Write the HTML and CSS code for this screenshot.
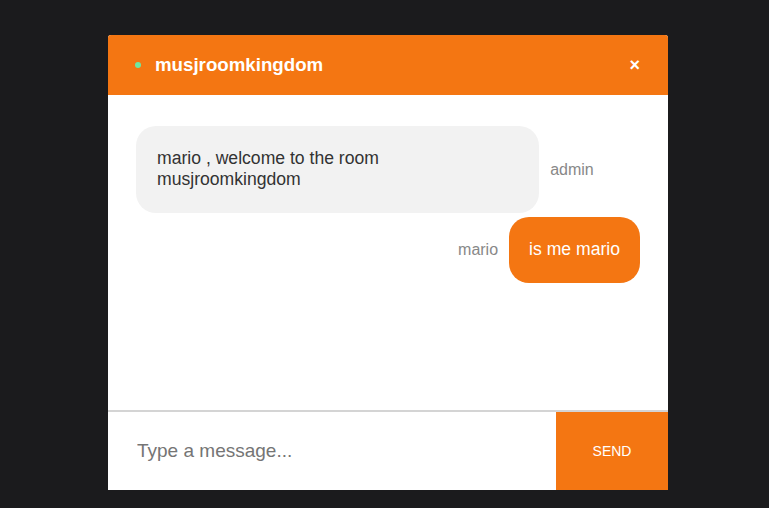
FILE: index.html
```html
<!DOCTYPE html>
<html>
<head>
<meta charset="utf-8">
<link rel="stylesheet" href="styles.css">
</head>
<body>
<div class="chat">
  <div class="chat-header">
    <span class="status-dot"></span>
    <span class="room-name">musjroomkingdom</span>
    <span class="close">×</span>
  </div>
  <div class="chat-body">
    <div class="msg-row other">
      <div class="bubble gray">mario , welcome to the room musjroomkingdom</div>
      <span class="sender">admin</span>
    </div>
    <div class="msg-row mine">
      <span class="sender">mario</span>
      <div class="bubble orange">is me mario</div>
    </div>
  </div>
  <div class="chat-footer">
    <input class="msg-input" type="text" placeholder="Type a message...">
    <button class="send">SEND</button>
  </div>
</div>
</body>
</html>
```
FILE: styles.css
```css
html, body {
  margin: 0;
  padding: 0;
  background: #1b1b1d;
  height: 100%;
}
body {
  font-family: "Liberation Sans", Arial, sans-serif;
  padding: 35px 0 0 108px;
  box-sizing: border-box;
}
.chat {
  width: 560px;
  display: flex;
  flex-direction: column;
  background: #fff;
  border-radius: 3px 3px 0 0;
}
.chat-header {
  height: 60px;
  background: #f47612;
  border-radius: 3px 3px 0 0;
  display: flex;
  align-items: center;
  padding: 0 28px 0 27px;
  color: #fff;
}
.status-dot {
  width: 6px;
  height: 6px;
  border-radius: 50%;
  background: #6ee8a0;
  margin-right: 14px;
}
.room-name {
  font-weight: bold;
  font-size: 18.7px;
  flex: 1;
}
.close {
  font-size: 18px;
  font-weight: bold;
  line-height: 1;
}
.chat-body {
  height: 315px;
  box-sizing: border-box;
  padding: 31px 28px 0 28px;
  display: flex;
  flex-direction: column;
  gap: 4px;
}
.msg-row {
  display: flex;
  align-items: center;
  gap: 11px;
}
.msg-row.mine {
  justify-content: flex-end;
}
.bubble {
  box-sizing: border-box;
  border-radius: 20px;
  font-size: 17.6px;
  line-height: 21px;
}
.bubble.gray {
  background: #f2f2f2;
  color: #333;
  flex: 0 0 80%;
  padding: 22px 20px 23px 21px;
}
.bubble.orange {
  background: #f47612;
  color: #fff;
  padding: 22px 20px 23px 20px;
}
.sender {
  color: #888;
  font-size: 16px;
}
.chat-footer {
  height: 80px;
  border-top: 2px solid #d4d4d4;
  box-sizing: border-box;
  display: flex;
}
.msg-input {
  flex: 1;
  border: none;
  outline: none;
  padding: 0 0 0 29px;
  font-family: "Liberation Sans", Arial, sans-serif;
  font-size: 19px;
  color: #333;
  background: #fff;
}
.msg-input::placeholder {
  color: #757575;
}
.send {
  width: 112px;
  border: none;
  background: #f47612;
  color: #fff;
  font-family: "Liberation Sans", Arial, sans-serif;
  font-size: 14px;
  padding: 0;
}
```
